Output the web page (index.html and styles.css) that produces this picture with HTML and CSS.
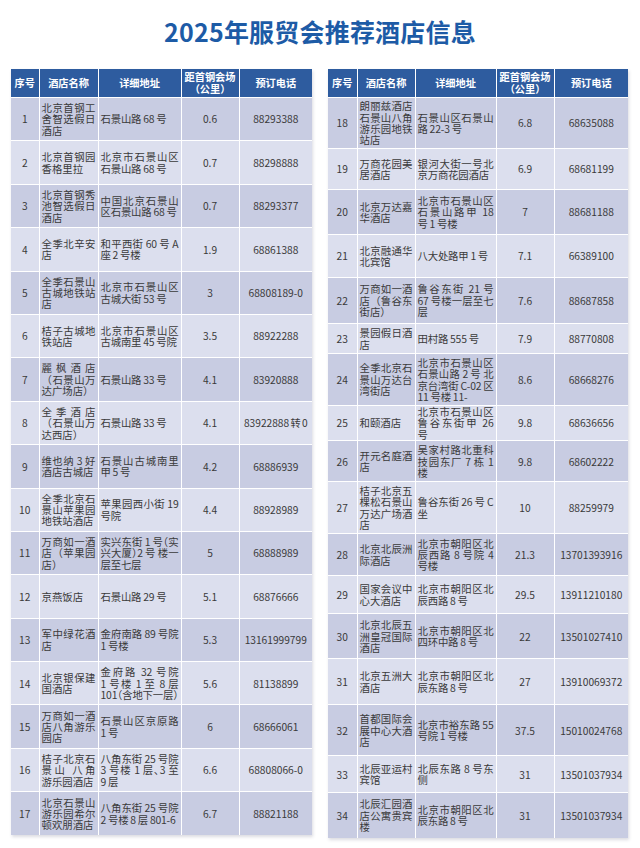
FILE: index.html
```html
<!DOCTYPE html>
<html lang="zh-CN">
<head>
<meta charset="utf-8">
<title>2025年服贸会推荐酒店信息</title>
<link rel="stylesheet" href="styles.css">
</head>
<body>
<h1 class="title">2025年服贸会推荐酒店信息</h1>
<div class="tables">
  <table class="hotels left">
    <colgroup><col class="c-no"><col class="c-name"><col class="c-addr"><col class="c-dist"><col class="c-tel"></colgroup>
    <thead>
      <tr><th>序号</th><th>酒店名称</th><th>详细地址</th><th><span class="hl">距首钢会场</span><span class="hl">（公里）</span></th><th>预订电话</th></tr>
    </thead>
    <tbody>
      <tr><td class="no">1</td><td class="txt">北京首钢工舍智选假日酒店</td><td class="txt addr">石景山路 68 号</td><td class="num">0.6</td><td class="num">88293388</td></tr>
      <tr><td class="no">2</td><td class="txt">北京首钢园香格里拉</td><td class="txt addr">北京市石景山区石景山路 68 号</td><td class="num">0.7</td><td class="num">88298888</td></tr>
      <tr><td class="no">3</td><td class="txt">北京首钢秀池智选假日酒店</td><td class="txt addr">中国北京石景山区石景山路 68 号</td><td class="num">0.7</td><td class="num">88293377</td></tr>
      <tr><td class="no">4</td><td class="txt">全季北辛安店</td><td class="txt addr">和平西街 60 号 A 座 2 号楼</td><td class="num">1.9</td><td class="num">68861388</td></tr>
      <tr><td class="no">5</td><td class="txt">全季石景山古城地铁站店</td><td class="txt addr">北京市石景山区古城大街 53 号</td><td class="num">3</td><td class="num">68808189-0</td></tr>
      <tr><td class="no">6</td><td class="txt">桔子古城地铁站店</td><td class="txt addr">北京市石景山区古城南里 45 号院</td><td class="num">3.5</td><td class="num">88922288</td></tr>
      <tr><td class="no">7</td><td class="txt">麗枫酒店（石景山万达广场店）</td><td class="txt addr">石景山路 33 号</td><td class="num">4.1</td><td class="num">83920888</td></tr>
      <tr><td class="no">8</td><td class="txt">全季酒店（石景山万达西店）</td><td class="txt addr">石景山路 33 号</td><td class="num">4.1</td><td class="num">83922888 转 0</td></tr>
      <tr><td class="no">9</td><td class="txt">维也纳 3 好酒店古城店</td><td class="txt addr">石景山古城南里甲 5 号</td><td class="num">4.2</td><td class="num">68886939</td></tr>
      <tr><td class="no">10</td><td class="txt">全季北京石景山苹果园地铁站酒店</td><td class="txt addr">苹果园西小街 19 号院</td><td class="num">4.4</td><td class="num">88928989</td></tr>
      <tr><td class="no">11</td><td class="txt">万商如一酒店（苹果园店）</td><td class="txt addr">实兴东街 1 号（实兴大厦）2 号 楼一层至七层</td><td class="num">5</td><td class="num">68888989</td></tr>
      <tr><td class="no">12</td><td class="txt">京燕饭店</td><td class="txt addr">石景山路 29 号</td><td class="num">5.1</td><td class="num">68876666</td></tr>
      <tr><td class="no">13</td><td class="txt">军中绿花酒店</td><td class="txt addr">金府南路 89 号院 1 号楼</td><td class="num">5.3</td><td class="num">13161999799</td></tr>
      <tr><td class="no">14</td><td class="txt">北京银保建国酒店</td><td class="txt addr">金府路 32 号院 1&nbsp;号楼 1 至 8 层 101（含地下一层）</td><td class="num">5.6</td><td class="num">81138899</td></tr>
      <tr><td class="no">15</td><td class="txt">万商如一酒店八角游乐园店</td><td class="txt addr">石景山区京原路 1 号</td><td class="num">6</td><td class="num">68666061</td></tr>
      <tr><td class="no">16</td><td class="txt">桔子北京石景山 八角游乐园酒店</td><td class="txt addr">八角东街 25 号院 3 号楼 1 层、3 至 9&nbsp;层</td><td class="num">6.6</td><td class="num">68808066-0</td></tr>
      <tr><td class="no">17</td><td class="txt">北京石景山游乐园希尔顿欢朋酒店</td><td class="txt addr">八角东街 25 号院 2 号楼 8 层 801-6</td><td class="num">6.7</td><td class="num">88821188</td></tr>
    </tbody>
  </table>
  <table class="hotels right">
    <colgroup><col class="c-no"><col class="c-name"><col class="c-addr"><col class="c-dist"><col class="c-tel"></colgroup>
    <thead>
      <tr><th>序号</th><th>酒店名称</th><th>详细地址</th><th><span class="hl">距首钢会场</span><span class="hl">（公里）</span></th><th>预订电话</th></tr>
    </thead>
    <tbody>
      <tr><td class="no">18</td><td class="txt">朗丽兹酒店石景山八角游乐园地铁站店</td><td class="txt addr">石景山区石景山路 22-3 号</td><td class="num">6.8</td><td class="num">68635088</td></tr>
      <tr><td class="no">19</td><td class="txt">万商花园美居酒店</td><td class="txt addr">银河大街一号北京万商花园酒店</td><td class="num">6.9</td><td class="num">68681199</td></tr>
      <tr><td class="no">20</td><td class="txt">北京万达嘉华酒店</td><td class="txt addr">北京市石景山区石景山路甲 18 号 1 号楼</td><td class="num">7</td><td class="num">88681188</td></tr>
      <tr><td class="no">21</td><td class="txt">北京融通华北宾馆</td><td class="txt addr">八大处路甲 1 号</td><td class="num">7.1</td><td class="num">66389100</td></tr>
      <tr><td class="no">22</td><td class="txt">万商如一酒店（鲁谷东街店）</td><td class="txt addr">鲁谷东街 21 号 67 号楼一层至七层</td><td class="num">7.6</td><td class="num">88687858</td></tr>
      <tr><td class="no">23</td><td class="txt">景园假日酒店</td><td class="txt addr">田村路 555 号</td><td class="num">7.9</td><td class="num">88770808</td></tr>
      <tr><td class="no">24</td><td class="txt">全季北京石景山万达台湾街店</td><td class="txt addr">北京市石景山区石景山路 2 号 北京台湾街 C-02 区 11 号楼 11-</td><td class="num">8.6</td><td class="num">68668276</td></tr>
      <tr><td class="no">25</td><td class="txt">和颐酒店</td><td class="txt addr">北京市石景山区鲁谷东街甲 26 号</td><td class="num">9.8</td><td class="num">68636656</td></tr>
      <tr><td class="no">26</td><td class="txt">开元名庭酒店</td><td class="txt addr">吴家村路北重科技园东厂 7 栋 1 楼</td><td class="num">9.8</td><td class="num">68602222</td></tr>
      <tr><td class="no">27</td><td class="txt">桔子北京五棵松石景山万达广场酒店</td><td class="txt addr">鲁谷东街 26 号 C 坐</td><td class="num">10</td><td class="num">88259979</td></tr>
      <tr><td class="no">28</td><td class="txt">北京北辰洲际酒店</td><td class="txt addr">北京市朝阳区北辰西路 8 号院 4 号楼</td><td class="num">21.3</td><td class="num">13701393916</td></tr>
      <tr><td class="no">29</td><td class="txt">国家会议中心大酒店</td><td class="txt addr">北京市朝阳区北辰西路 8 号</td><td class="num">29.5</td><td class="num">13911210180</td></tr>
      <tr><td class="no">30</td><td class="txt">北京北辰五洲皇冠国际酒店</td><td class="txt addr">北京市朝阳区北四环中路 8 号</td><td class="num">22</td><td class="num">13501027410</td></tr>
      <tr><td class="no">31</td><td class="txt">北京五洲大酒店</td><td class="txt addr">北京市朝阳区北辰东路 8 号</td><td class="num">27</td><td class="num">13910069372</td></tr>
      <tr><td class="no">32</td><td class="txt">首都国际会展中心大酒店</td><td class="txt addr">北京市裕东路 55 号院 1 号楼</td><td class="num">37.5</td><td class="num">15010024768</td></tr>
      <tr><td class="no">33</td><td class="txt">北辰亚运村宾馆</td><td class="txt addr">北辰东路 8 号东侧</td><td class="num">31</td><td class="num">13501037934</td></tr>
      <tr><td class="no">34</td><td class="txt">北辰汇园酒店公寓贵宾楼</td><td class="txt addr">北京市朝阳区北辰东路 8 号</td><td class="num">31</td><td class="num">13501037934</td></tr>
    </tbody>
  </table>
</div>
</body>
</html>
```
FILE: styles.css
```css
html, body {
  margin: 0;
  padding: 0;
  background: #ffffff;
}
body {
  width: 640px;
  height: 848px;
  overflow: hidden;
  font-family: "Noto Sans CJK SC", "Noto Sans", sans-serif;
  color: #3a3a3a;
}
.title {
  margin: 16px 0 23px;
  height: 30px;
  line-height: 30px;
  text-align: center;
  font-size: 25px;
  font-weight: 700;
  color: #1d5ba6;
  letter-spacing: 0.2px;
}
.tables {
  display: flex;
  gap: 16px;
  padding: 0 12px 0 11px;
  align-items: flex-start;
}
.hotels {
  border-collapse: collapse;
  table-layout: fixed;
  font-size: 10.4px;
  line-height: 11.4px;
  box-shadow: 1px 2px 3px rgba(60, 60, 90, 0.18);
}
.left { width: 301px; }
.right { width: 300px; }
.left .c-no { width: 28px; }
.left .c-name { width: 59px; }
.left .c-addr { width: 83px; }
.left .c-dist { width: 58px; }
.left .c-tel { width: 73px; }
.right .c-no { width: 29px; }
.right .c-name { width: 58px; }
.right .c-addr { width: 81px; }
.right .c-dist { width: 58px; }
.right .c-tel { width: 74px; }
.hotels th {
  height: 28px;
  padding: 0;
  background: #2e5c9f;
  color: #ffffff;
  font-weight: 700;
  font-size: 10.2px;
  line-height: 12px;
  text-align: center;
  vertical-align: middle;
  border: 1.5px solid #ffffff;
  border-top: 0;
}
.hotels th .hl {
  display: block;
  height: 12px;
  line-height: 12px;
  white-space: nowrap;
}
.hotels td {
  padding: 0 2px;
  vertical-align: middle;
  border: 1.5px solid #ffffff;
}
.hotels tr > :first-child { border-left: 0; }
.hotels tr > :last-child { border-right: 0; }
.hotels tbody tr:last-child td { border-bottom: 0; }
.hotels tbody tr:nth-child(odd) td { background: #c8cce2; }
.hotels tbody tr:nth-child(even) td { background: #dcdfee; }
.hotels td.no, .hotels td.num {
  text-align: center;
  font-size: 10.2px;
  white-space: nowrap;
  word-spacing: -1px;
}
.hotels td.txt {
  text-align: justify;
  word-spacing: -0.2px;
}
.hotels td.addr {
  letter-spacing: -0.2px;
  font-feature-settings: "halt" 1;
}
.left tbody tr { height: 43.4px; }
.right tbody tr:nth-child(1) { height: 51px; }
.right tbody tr:nth-child(2) { height: 41px; }
.right tbody tr:nth-child(3) { height: 45px; }
.right tbody tr:nth-child(4) { height: 43px; }
.right tbody tr:nth-child(5) { height: 46px; }
.right tbody tr:nth-child(6) { height: 30px; }
.right tbody tr:nth-child(7) { height: 52px; }
.right tbody tr:nth-child(8) { height: 33px; }
.right tbody tr:nth-child(9) { height: 41px; }
.right tbody tr:nth-child(10) { height: 52px; }
.right tbody tr:nth-child(11) { height: 42px; }
.right tbody tr:nth-child(12) { height: 38px; }
.right tbody tr:nth-child(13) { height: 45px; }
.right tbody tr:nth-child(14) { height: 46px; }
.right tbody tr:nth-child(15) { height: 51px; }
.right tbody tr:nth-child(16) { height: 37px; }
.right tbody tr:nth-child(17) { height: 45px; }
```
